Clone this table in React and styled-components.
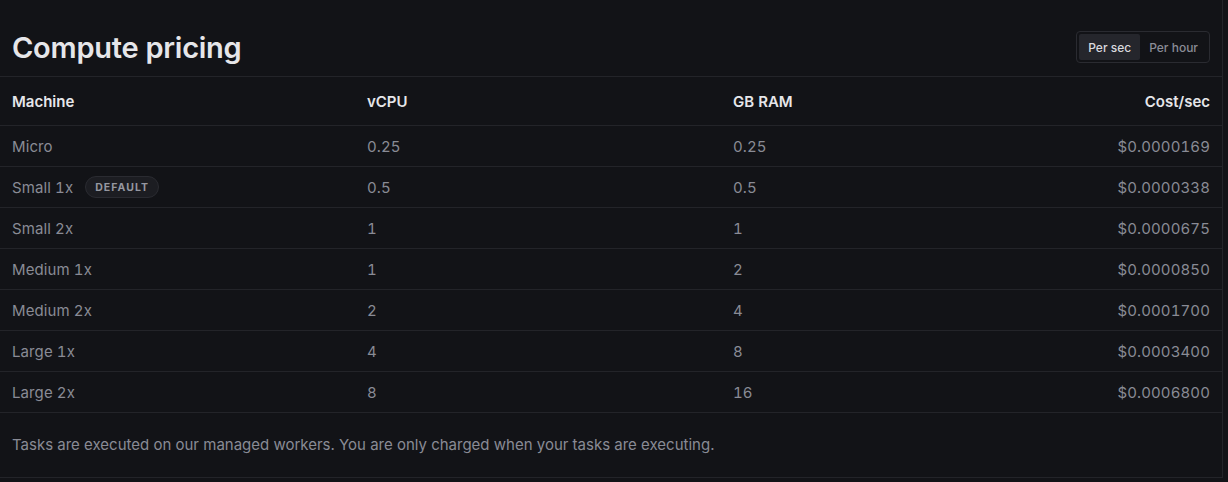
import React from "react";
import styled, { createGlobalStyle } from "styled-components";

const Global = createGlobalStyle`
  html, body { margin: 0; padding: 0; background: #121317; }
  body { font-family: Inter, "Noto Sans", sans-serif; -webkit-font-smoothing: antialiased; }
  * { box-sizing: border-box; }
`;

const Card = styled.section`
  width: 1223px;
  height: 478px;
  background: #121317;
  border-right: 1px solid #232429;
  border-bottom: 1px solid #232429;
  display: flex;
  flex-direction: column;
`;

const TitleBar = styled.header`
  height: 77px;
  flex: none;
  display: flex;
  align-items: center;
  justify-content: space-between;
  padding: 18px 12px 0;
  border-bottom: 1px solid #232429;
`;

const Title = styled.h2`
  margin: 0;
  font-size: 29px;
  font-weight: 600;
  letter-spacing: -0.25px;
  color: #e6e6e9;
`;

const Toggle = styled.div`
  display: flex;
  padding: 2px;
  border: 1px solid #2a2b31;
  border-radius: 4px;
  height: 32px;
`;

const ToggleBtn = styled.button`
  border: none;
  border-radius: 2px;
  padding: 0 9px;
  font-family: inherit;
  font-size: 12px;
  font-weight: 500;
  cursor: pointer;
  background: ${(p) => (p.$active ? "#25262c" : "transparent")};
  color: ${(p) => (p.$active ? "#d9d9de" : "#8a8c96")};
`;

const Row = styled.div`
  display: grid;
  grid-template-columns: 355px 366px 1fr auto;
  align-items: center;
  padding: 0 12px;
  height: ${(p) => (p.$head ? "49px" : "41px")};
  flex: none;
  border-bottom: 1px solid #232429;
  font-size: 15px;
  font-variant-numeric: tabular-nums;
  letter-spacing: ${(p) => (p.$head ? "0" : "0.1px")};
  color: ${(p) => (p.$head ? "#e6e6ea" : "#898b95")};
  font-weight: ${(p) => (p.$head ? 600 : 400)};
`;

const Cell = styled.div`
  display: flex;
  align-items: center;
  gap: 12px;
  justify-content: ${(p) => (p.$right ? "flex-end" : "flex-start")};
`;

const Badge = styled.span`
  display: inline-flex;
  align-items: center;
  height: 22px;
  padding: 0 9px;
  border-radius: 11px;
  background: #1c1d22;
  border: 1px solid #2a2b31;
  color: #9597a0;
  font-size: 10.5px;
  font-weight: 700;
  letter-spacing: 1.05px;
  text-transform: uppercase;
`;

const Footer = styled.p`
  margin: 0;
  flex: 1;
  display: flex;
  align-items: center;
  padding: 0 12px 1px;
  font-size: 15px;
  color: #898b95;
`;

const machines = [
  { name: "Micro", cpu: "0.25", ram: "0.25", cost: "$0.0000169" },
  { name: "Small 1x", cpu: "0.5", ram: "0.5", cost: "$0.0000338", badge: "Default" },
  { name: "Small 2x", cpu: "1", ram: "1", cost: "$0.0000675" },
  { name: "Medium 1x", cpu: "1", ram: "2", cost: "$0.0000850" },
  { name: "Medium 2x", cpu: "2", ram: "4", cost: "$0.0001700" },
  { name: "Large 1x", cpu: "4", ram: "8", cost: "$0.0003400" },
  { name: "Large 2x", cpu: "8", ram: "16", cost: "$0.0006800" },
];

export default function App() {
  return (
    <>
      <Global />
      <Card>
        <TitleBar>
          <Title>Compute pricing</Title>
          <Toggle>
            <ToggleBtn $active>Per sec</ToggleBtn>
            <ToggleBtn>Per hour</ToggleBtn>
          </Toggle>
        </TitleBar>
        <Row $head>
          <Cell>Machine</Cell>
          <Cell>vCPU</Cell>
          <Cell>GB RAM</Cell>
          <Cell $right>Cost/sec</Cell>
        </Row>
        {machines.map((m) => (
          <Row key={m.name}>
            <Cell>
              {m.name}
              {m.badge && <Badge>{m.badge}</Badge>}
            </Cell>
            <Cell>{m.cpu}</Cell>
            <Cell>{m.ram}</Cell>
            <Cell $right>{m.cost}</Cell>
          </Row>
        ))}
        <Footer>
          Tasks are executed on our managed workers. You are only charged when your tasks are executing.
        </Footer>
      </Card>
    </>
  );
}
